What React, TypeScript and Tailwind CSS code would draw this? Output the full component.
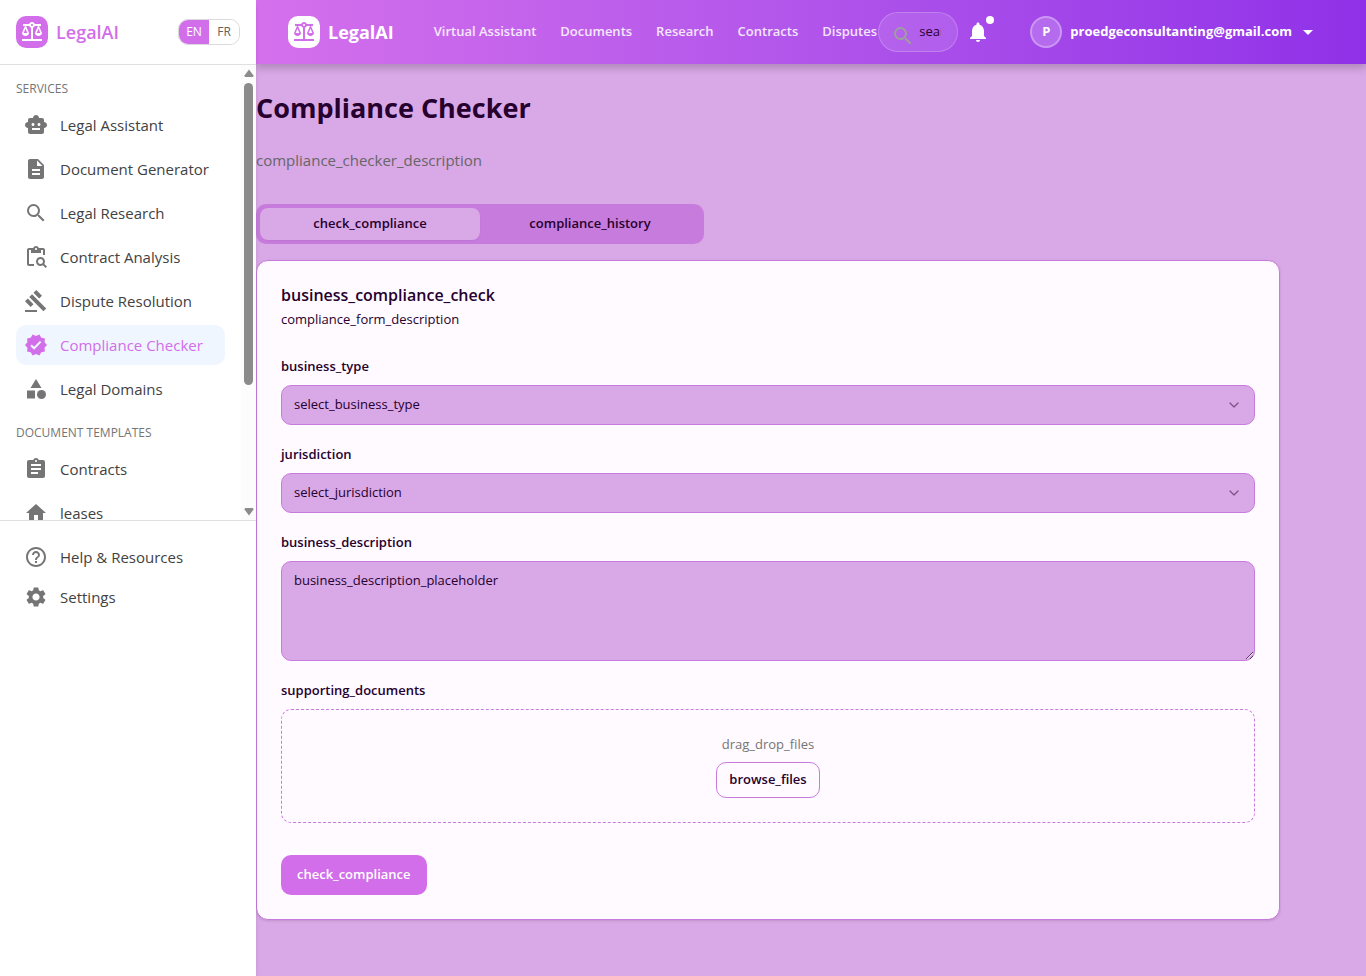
import type { ReactNode } from "react";
import type { IconType } from "react-icons";
import {
  MdArrowDropDown,
  MdAssignment,
  MdBalance,
  MdCategory,
  MdContentPasteSearch,
  MdDescription,
  MdGavel,
  MdHelpOutline,
  MdHome,
  MdNotifications,
  MdSearch,
  MdSettings,
  MdSmartToy,
  MdVerified,
} from "react-icons/md";
import { ChevronDown } from "lucide-react";

type Item = { label: string; icon: IconType; active?: boolean };

const services: Item[] = [
  { label: "Legal Assistant", icon: MdSmartToy },
  { label: "Document Generator", icon: MdDescription },
  { label: "Legal Research", icon: MdSearch },
  { label: "Contract Analysis", icon: MdContentPasteSearch },
  { label: "Dispute Resolution", icon: MdGavel },
  { label: "Compliance Checker", icon: MdVerified, active: true },
  { label: "Legal Domains", icon: MdCategory },
];

const templates: Item[] = [
  { label: "Contracts", icon: MdAssignment },
  { label: "leases", icon: MdHome },
];

const support: Item[] = [
  { label: "Help & Resources", icon: MdHelpOutline },
  { label: "Settings", icon: MdSettings },
];

const navLinks = ["Virtual Assistant", "Documents", "Research", "Contracts", "Disputes"];

function NavItem({ label, icon: Icon, active }: Item) {
  return (
    <a
      href="#"
      aria-current={active ? "page" : undefined}
      className={
        active
          ? "flex h-10 items-center gap-3 rounded-[10px] bg-[#eff6ff] px-2 text-[15px] text-[#d26eea]"
          : "flex h-10 items-center gap-3 rounded-[10px] px-2 text-[15px] text-[#424242]"
      }
    >
      <Icon className={active ? "size-6 shrink-0" : "size-6 shrink-0 text-[#757575]"} />
      {label}
    </a>
  );
}

function SectionTitle({ children }: { children: ReactNode }) {
  return <h2 className="text-xs leading-4 font-medium text-[#757575] uppercase">{children}</h2>;
}

function Sidebar() {
  return (
    <aside className="z-20 w-64 shrink-0 bg-white shadow-md">
      <div className="flex h-[65px] items-center justify-between border-b border-[#e0e0e0] px-4">
        <a href="#" className="flex items-center gap-2 text-lg font-semibold text-[#d26eea]">
          <span className="flex size-8 items-center justify-center rounded-[10px] bg-[#d26eea] text-white">
            <MdBalance className="size-6" />
          </span>
          LegalAI
        </a>
        <div className="flex h-[26px] overflow-hidden rounded-[10px] border border-[#d9d9d9] text-xs">
          <button className="w-[30px] bg-[#d26eea] text-white">EN</button>
          <button className="w-[30px] bg-white text-[#616161]">FR</button>
        </div>
      </div>
      <div className="flex h-[455px]">
        <nav className="min-w-0 flex-1 overflow-y-auto px-4 pt-4 [scrollbar-width:none]">
          <SectionTitle>Services</SectionTitle>
          <div className="mt-2 flex flex-col gap-1">
            {services.map((item) => (
              <NavItem key={item.label} {...item} />
            ))}
          </div>
          <div className="mt-4">
            <SectionTitle>Document Templates</SectionTitle>
          </div>
          <div className="mt-2 flex flex-col gap-1">
            {templates.map((item) => (
              <NavItem key={item.label} {...item} />
            ))}
          </div>
        </nav>
        <div aria-hidden="true" className="flex w-[15px] flex-col items-center bg-[#fcfcfc] py-1">
          <svg viewBox="0 0 10 8" className="h-2 w-[10px] fill-[#8b8b8b]">
            <path d="M5 0.5 L9.5 6.5 Q9.5 8 8.5 8 H1.5 Q0.5 8 0.5 6.5 Z" />
          </svg>
          <div className="mt-[6px] h-[302px] w-[9px] rounded-full bg-[#8b8b8b]" />
          <svg viewBox="0 0 10 8" className="mt-auto h-2 w-[10px] fill-[#8b8b8b]">
            <path d="M5 7.5 L9.5 1.5 Q9.5 0 8.5 0 H1.5 Q0.5 0 0.5 1.5 Z" />
          </svg>
        </div>
      </div>
      <nav className="border-t border-[#e0e0e0] p-4">
        {support.map((item) => (
          <NavItem key={item.label} {...item} />
        ))}
      </nav>
    </aside>
  );
}

function Header() {
  return (
    <header className="z-10 flex h-16 items-center bg-linear-to-r from-[#d570ec] to-[#9030e8] pr-[46px] pl-8 text-white shadow-[0_4px_8px_rgba(0,0,0,0.2)]">
      <a href="#" className="flex shrink-0 items-center gap-2 text-lg font-bold">
        <span className="flex size-8 items-center justify-center rounded-[10px] bg-white text-[#d26eea]">
          <MdBalance className="size-6" />
        </span>
        LegalAI
      </a>
      <nav className="ml-10 flex min-w-0 flex-1 gap-6 text-[13px] font-semibold whitespace-nowrap text-white/85">
        {navLinks.map((link) => (
          <a key={link} href="#">
            {link}
          </a>
        ))}
      </nav>
      <label className="flex h-10 w-20 shrink-0 items-center rounded-full border border-white/20 bg-white/10 pr-4 pl-3">
        <MdSearch className="mt-2 size-6 shrink-0 text-[#9e9e9e]" />
        <input
          type="text"
          aria-label="search"
          placeholder="search"
          className="ml-1 w-6 min-w-0 bg-transparent text-[13px] text-[#2a0030] outline-none placeholder:text-[#2a0030]"
        />
      </label>
      <button aria-label="Notifications" className="relative ml-2 flex size-6 shrink-0 items-center justify-center">
        <MdNotifications className="size-6" />
        <span className="absolute -top-1 -right-1 size-2 rounded-full bg-white" />
      </button>
      <button className="ml-10 flex shrink-0 items-center gap-2 text-[13px] font-bold">
        <span className="flex size-8 items-center justify-center rounded-full border-2 border-white/30 bg-white/20">
          P
        </span>
        proedgeconsultanting@gmail.com
        <MdArrowDropDown className="-ml-1 size-6" />
      </button>
    </header>
  );
}

const fieldBox = "w-full rounded-[10px] border border-[#c77bdc] bg-[#d9a8e6] px-3 text-[13px] text-[#26002e]";
const fieldLabel = "block text-[13px] leading-[18px] font-semibold";

function SelectField({ id }: { id: string }) {
  return (
    <div>
      <label htmlFor={id} className={fieldLabel}>
        {id}
      </label>
      <div className="relative mt-[10px]">
        <select id={id} className={`${fieldBox} h-10 appearance-none`}>
          <option>{`select_${id}`}</option>
        </select>
        <ChevronDown className="pointer-events-none absolute top-3 right-[13px] size-4 text-[#26002e] opacity-50" />
      </div>
    </div>
  );
}

export default function App() {
  return (
    <div className="flex min-h-screen bg-[#d9a8e6] font-['Open_Sans',sans-serif] text-[#26002e]">
      <Sidebar />
      <div className="flex min-w-0 flex-1 flex-col">
        <Header />
        <main className="max-w-5xl pt-6">
          <h1 className="text-[27px] leading-10 font-bold">Compliance Checker</h1>
          <p className="mt-5 text-[15px] leading-6 text-[#666666]">compliance_checker_description</p>
          <div
            role="tablist"
            className="mt-8 grid h-10 max-w-md grid-cols-2 rounded-[10px] bg-[#c77bdc] p-1 text-[13px] font-semibold"
          >
            <button role="tab" aria-selected="true" className="rounded-[8px] bg-[#d9a8e6] shadow-xs">
              check_compliance
            </button>
            <button role="tab" aria-selected="false">
              compliance_history
            </button>
          </div>
          <section className="mt-4 rounded-xl border border-[#c77bdc] bg-[#fffaff] p-6 shadow-sm">
            <h2 className="text-base leading-5 font-semibold">business_compliance_check</h2>
            <p className="mt-1 text-[13px] leading-5">compliance_form_description</p>
            <form className="mt-7 flex flex-col gap-5">
              <SelectField id="business_type" />
              <SelectField id="jurisdiction" />
              <div>
                <label htmlFor="description" className={fieldLabel}>
                  business_description
                </label>
                <textarea
                  id="description"
                  placeholder="business_description_placeholder"
                  className={`${fieldBox} mt-[10px] block h-[100px] py-2 leading-5 placeholder:text-[#26002e]`}
                />
              </div>
              <div>
                <h3 className={fieldLabel}>supporting_documents</h3>
                <div className="mt-[10px] flex flex-col items-center gap-2 rounded-[10px] border border-dashed border-[#c77bdc] p-6">
                  <p className="text-[13px] leading-5 text-[#757575]">drag_drop_files</p>
                  <button type="button" className="h-9 rounded-[10px] border border-[#c77bdc] px-3 text-[13px] font-semibold">
                    browse_files
                  </button>
                </div>
              </div>
              <button type="button" className="mt-3 h-10 self-start rounded-[10px] bg-[#d26eea] px-4 text-[13px] font-semibold text-white">
                check_compliance
              </button>
            </form>
          </section>
        </main>
      </div>
    </div>
  );
}
